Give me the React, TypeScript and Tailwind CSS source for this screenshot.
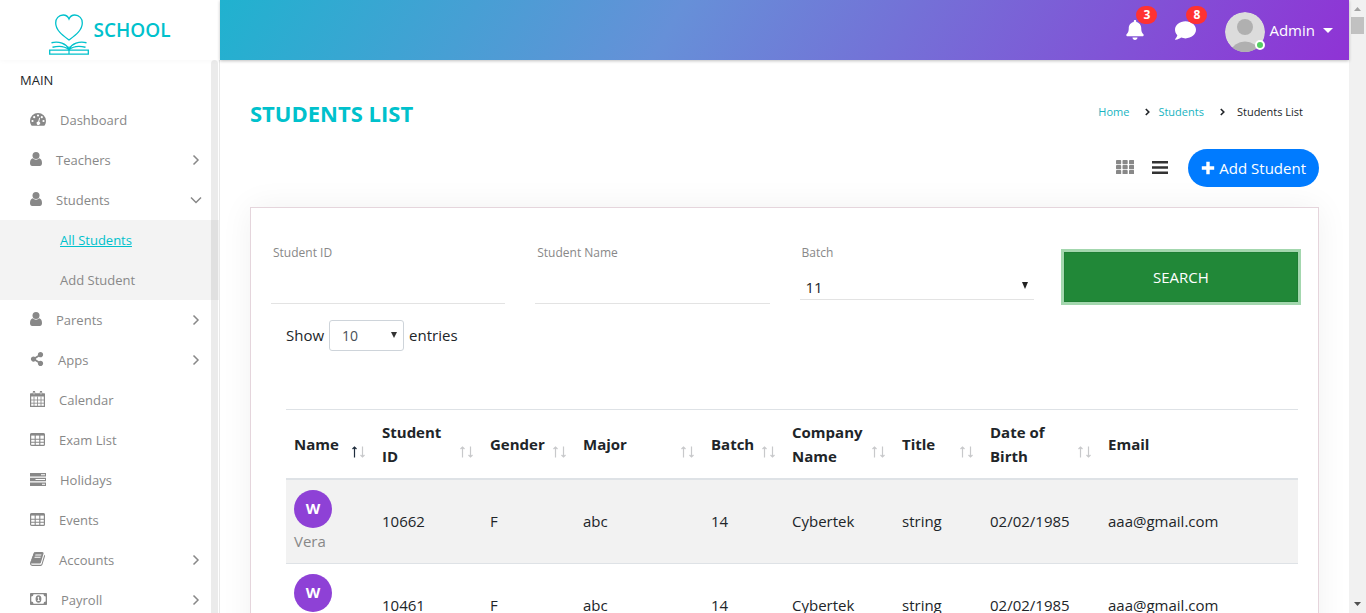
import React from "react";
import { FaBell, FaComment, FaShareAlt } from "react-icons/fa";

type IconProps = { className?: string };

const UserIcon = ({ className }: IconProps) => (
  <svg viewBox="0 0 12 14" className={className} fill="currentColor" aria-hidden="true">
    <circle cx="6" cy="3.6" r="3.5" />
    <path d="M2.7 6.2C.7 6.6 0 8.900 0 11.300 0 12.800.9 14 2.200 14h7.600c1.300 0 2.200-1.200 2.200-2.700 0-2.400-.7-4.700-2.700-5.100A4.600 4.600 0 0 1 6 7.700a4.600 4.600 0 0 1-3.300-1.500z" />
  </svg>
);

const GaugeIcon = ({ className }: IconProps) => (
  <svg viewBox="0 0 16 13" className={className} aria-hidden="true">
    <path d="M0 8a8 8 0 0 1 16 0c0 1.500-.4 3-1.200 4.300-.2.300-.4.400-.7.400H1.900c-.3 0-.5-.1-.7-.4A8 8 0 0 1 0 8z" fill="currentColor" />
    <g fill="#fff">
      <circle cx="2.500" cy="8" r="1.100" />
      <circle cx="4.200" cy="4.200" r="1.100" />
      <circle cx="8" cy="2.500" r="1.100" />
      <circle cx="11.800" cy="4.200" r="1.100" />
      <circle cx="13.500" cy="8" r="1.100" />
      <path d="M9.200 4.800l.9.200-.9 3.700a1.700 1.700 0 1 1-1-.2z" />
    </g>
  </svg>
);

const CalendarIcon = ({ className }: IconProps) => (
  <svg viewBox="0 0 15 16" className={className} fill="none" stroke="currentColor" aria-hidden="true">
    <path d="M.6 3h13.800v12.400H.6z" strokeWidth="1.200" />
    <path d="M.5 2.500h14v3H.5z" fill="currentColor" stroke="none" />
    <path d="M4 5.500v10M7.500 5.500v10M11 5.500v10M.5 9h14M.5 12.200h14" strokeWidth=".8" />
    <path d="M4 1v2.600M11 1v2.600" strokeWidth="2.400" strokeLinecap="round" />
    <path d="M4 1.200v2.200M11 1.200v2.200" stroke="#fff" strokeWidth=".8" />
  </svg>
);

const TableIcon = ({ className }: IconProps) => (
  <svg viewBox="0 0 15 13" className={className} fill="none" stroke="currentColor" aria-hidden="true">
    <rect x=".6" y=".6" width="13.800" height="11.800" rx="1" strokeWidth="1.200" />
    <path d="M.6 1.600h13.800" strokeWidth="2" />
    <path d="M5.200 1v11.500M9.800 1v11.500M.5 6.200h14M.5 9.300h14" strokeWidth="1.100" />
  </svg>
);

const TasksIcon = ({ className }: IconProps) => (
  <svg viewBox="0 0 16 13" className={className} aria-hidden="true">
    <path d="M0 0h16v3.600H0zM0 4.700h16v3.600H0zM0 9.400h16V13H0z" fill="currentColor" />
    <path d="M11 1.300h4v1h-4zM5.500 6H15v1H5.500zM12 10.700h3v1h-3z" fill="#fff" />
  </svg>
);

const BookIcon = ({ className }: IconProps) => (
  <svg viewBox="60 128 1670 1540" className={className} fill="currentColor" aria-hidden="true">
    <path d="M1703 478q40 57 18 129l-275 906q-19 64-76.500 107.500t-122.500 43.500h-923q-77 0-148.500-53.500t-99.500-131.500q-24-67-2-127 0-4 3-27t4-37q1-8-3-21.500t-3-19.500q2-11 8-21t16.500-23.500 16.500-23.500q23-38 45-91.500t30-91.500q3-10 .5-30t-.5-28q3-11 17-28t17-23q21-36 42-92t25-90q1-9-2.500-32t.5-28q4-13 22-30.500t22-22.500q19-26 42.500-84.500t27.500-96.500q1-8-3-25.500t-2-26.500q2-8 9-18t18-23 17-21q8-12 16.500-30.500t15-35 16-36 19.500-32 26.500-23.500 36-11.500 47.500 5.500l-1 3q38-9 51-9h761q74 0 114 56t18 130l-274 906q-36 119-71.500 153.500t-128.500 34.500h-869q-27 0-38 15-11 16-1 43 24 70 144 70h923q29 0 56-15.500t35-41.500l300-987q7-22 5-57 38 15 59 43zm-1064 2q-4 13 2 22.500t20 9.500h608q13 0 25.500-9.500t16.500-22.500l21-64q4-13-2-22.500t-20-9.500h-608q-13 0-25.500 9.500t-16.500 22.500zm-83 256q-4 13 2 22.500t20 9.500h608q13 0 25.500-9.500t16.500-22.500l21-64q4-13-2-22.500t-20-9.500h-608q-13 0-25.500 9.500t-16.500 22.500z" />
  </svg>
);

const MoneyIcon = ({ className }: IconProps) => (
  <svg viewBox="0 0 17 12" className={className} aria-hidden="true">
    <rect width="17" height="12" rx=".8" fill="currentColor" />
    <path d="M3.500 1.300h10a2.200 2.200 0 0 0 2.200 2.200v5a2.200 2.200 0 0 0-2.200 2.200h-10a2.200 2.200 0 0 0-2.200-2.200v-5a2.200 2.200 0 0 0 2.200-2.200z" fill="#fff" />
    <ellipse cx="8.500" cy="6" rx="2.900" ry="3.700" fill="currentColor" />
    <path d="M7.400 4.700l1-.9h.7v3.500h.8v.8H7.300v-.8h.8V5.100l-.4.300z" fill="#fff" />
  </svg>
);

const Chevron = ({ open }: { open?: boolean }) => (
  <svg viewBox="0 0 12 12" className="ml-auto h-3 w-3" fill="none" stroke="currentColor" strokeWidth="1.500" aria-hidden="true">
    {open ? <path d="M1 3.500l5 5 5-5" /> : <path d="M3.500 1.500L8 6l-4.500 4.500" />}
  </svg>
);

const Logo = () => (
  <svg viewBox="0 0 40 42" className="h-[42px] w-10" fill="none" stroke="#00c1cc" aria-hidden="true">
    <path d="M20 27C14 22.500 6.700 17.500 6.700 10A7.500 7.500 0 0 1 14.200 2C17 2 19 3.500 20 6c1-2.500 3-4 5.800-4a7.500 7.500 0 0 1 7.500 8c0 7.500-7.300 12.500-13.300 17z" strokeWidth="1.300" />
    <path d="M.7 37.200h38.600v3.900H.7z" strokeWidth="1.300" />
    <path d="M20 33.500v7.500" strokeWidth="1.200" />
    <path d="M2.500 29.700c7.500-1.700 14.500.8 17.500 6.300 3-5.500 10-8 17.500-6.300M3.500 34.300c6-1.500 12.500-1 16.500 2.500 4-3.500 10.500-4 16.500-2.500" strokeWidth="1.400" />
  </svg>
);

type NavItem = {
  label: string;
  icon: React.ReactNode;
  expandable?: boolean;
  children?: { label: string; active?: boolean }[];
};

const navItems: NavItem[] = [
  { label: "Dashboard", icon: <GaugeIcon className="h-[13px] w-4" /> },
  { label: "Teachers", icon: <UserIcon className="h-3.5 w-3" />, expandable: true },
  {
    label: "Students",
    icon: <UserIcon className="h-3.5 w-3" />,
    expandable: true,
    children: [{ label: "All Students", active: true }, { label: "Add Student" }],
  },
  { label: "Parents", icon: <UserIcon className="h-3.5 w-3" />, expandable: true },
  { label: "Apps", icon: <FaShareAlt className="h-3.5 w-3.5" />, expandable: true },
  { label: "Calendar", icon: <CalendarIcon className="h-4 w-[15px]" /> },
  { label: "Exam List", icon: <TableIcon className="h-[13px] w-[15px]" /> },
  { label: "Holidays", icon: <TasksIcon className="h-[13px] w-4" /> },
  { label: "Events", icon: <TableIcon className="h-[13px] w-[15px]" /> },
  { label: "Accounts", icon: <BookIcon className="h-3.5 w-[15px]" />, expandable: true },
  { label: "Payroll", icon: <MoneyIcon className="h-3 w-[17px]" />, expandable: true },
];

const columns = [
  { label: "Name", width: "w-[88px]", sorted: true },
  { label: "Student ID", width: "w-[108px]" },
  { label: "Gender", width: "w-[93px]" },
  { label: "Major", width: "w-[128px]" },
  { label: "Batch", width: "w-[81px]" },
  { label: "Company Name", width: "w-[110px]" },
  { label: "Title", width: "w-[88px]" },
  { label: "Date of Birth", width: "w-[118px]" },
  { label: "Email", width: "w-[198px]", unsortable: true },
];

const students = [
  { name: "Vera", id: "10662" },
  { name: "Vera", id: "10461" },
];

const SortArrows = ({ active }: { active?: boolean }) => (
  <svg viewBox="0 0 14 12" className="absolute right-2 bottom-5 h-3 w-3.5" fill="none" strokeWidth="1.200" aria-hidden="true">
    <path d="M2.500 11.500V1M.5 3L2.500 1l2 2" stroke={active ? "#1f2d3d" : "#c8c9cb"} />
    <path d="M10.500 .5V11M8.500 9l2 2 2-2" stroke="#c8c9cb" />
  </svg>
);

const Header = () => (
  <header className="z-10 flex h-[60px] shrink-0">
    <a href="#home" className="flex w-[220px] shrink-0 items-center justify-center gap-1 bg-white pt-[7px] shadow-[0_0_6px_rgba(0,0,0,0.04)]">
      <Logo />
      <span className="pb-1.5 text-[19px] font-semibold text-[#00c1cc]">SCHOOL</span>
    </a>
    <div className="flex grow items-center justify-end bg-[linear-gradient(120deg,#20b2cf_0%,#6690d8_40%,#8f33d5_100%)] pr-4 text-white shadow-[0_1px_3px_rgba(0,0,0,0.25)]">
      <button type="button" aria-label="Notifications" className="relative mr-[30px]">
        <FaBell className="h-5 w-5" />
        <span className="absolute -top-[14px] left-[11px] flex h-[18px] w-[21px] items-center justify-center rounded-full bg-[#ff3232] text-xs font-bold">3</span>
      </button>
      <button type="button" aria-label="Messages" className="relative mr-[29px]">
        <FaComment className="h-[21px] w-[21px]" />
        <span className="absolute -top-[14px] left-[11px] flex h-[18px] w-[21px] items-center justify-center rounded-full bg-[#ff3232] text-xs font-bold">8</span>
      </button>
      <button type="button" className="flex items-center gap-1 text-[15px]">
        <span className="relative mt-1 block">
          <svg viewBox="0 0 40 40" className="h-10 w-10 rounded-full" aria-hidden="true">
            <circle cx="20" cy="20" r="20" fill="#dcdcdc" />
            <circle cx="20" cy="15" r="8" fill="#b0b0b0" />
            <path d="M5 40a15.500 14 0 0 1 30 0z" fill="#b0b0b0" />
          </svg>
          <span className="absolute right-0 bottom-[2px] h-2.5 w-2.5 rounded-full border-2 border-white bg-[#55ce63]" />
        </span>
        Admin
        <svg viewBox="0 0 10 5" className="ml-1 h-[5px] w-2.5" fill="currentColor" aria-hidden="true">
          <path d="M0 0h10L5 5z" />
        </svg>
      </button>
    </div>
  </header>
);

const Sidebar = () => (
  <aside className="flex w-[220px] shrink-0 overflow-hidden border-r border-[#e8e8e8] bg-white text-[#888]">
    <nav className="relative grow text-[13px]">
      <div className="flex h-10 items-center px-5 pt-0.5 text-[#212529]">MAIN</div>
      <ul>
        {navItems.map((item) => (
          <li key={item.label}>
            <a href="#nav" className="flex h-10 items-center gap-3.5 pr-[17px] pl-[30px]">
              <span className="pb-0.5">{item.icon}</span>
              <span className="pt-0.5">{item.label}</span>
              {item.expandable && <Chevron open={!!item.children} />}
            </a>
            {item.children && (
              <ul className="bg-[#f3f3f3]">
                {item.children.map((child) => (
                  <li key={child.label}>
                    <a
                      href="#nav"
                      className={`flex h-10 items-center pt-0.5 pl-[60px] ${child.active ? "text-[#00c1cc] underline" : ""}`}
                    >
                      {child.label}
                    </a>
                  </li>
                ))}
              </ul>
            )}
          </li>
        ))}
      </ul>
      <div className="absolute top-0 right-px h-full w-[7px] rounded-t bg-black/8" />
    </nav>
  </aside>
);

const TextField = ({ id, label }: { id: string; label: string }) => (
  <div className="flex flex-col border-b border-[#e3e3e3]">
    <label htmlFor={id} className="pl-0.5 text-xs leading-5 text-[#888]">
      {label}
    </label>
    <input id={id} type="text" className="h-10 w-full px-1 text-[15px] outline-none" />
  </div>
);

const SearchForm = () => (
  <form className="grid grid-cols-4 items-start gap-[30px]" onSubmit={(e) => e.preventDefault()}>
    <TextField id="student-id" label="Student ID" />
    <TextField id="student-name" label="Student Name" />
    <div className="flex flex-col border-b border-[#e3e3e3]">
      <label htmlFor="batch" className="pl-0.5 text-xs leading-5 text-[#888]">
        Batch
      </label>
      <div className="relative pt-3">
        <select id="batch" className="block h-6 w-full appearance-none pl-1.5 text-[15px] outline-none">
          <option>11</option>
        </select>
        <svg viewBox="0 0 6 7" className="pointer-events-none absolute right-1.5 bottom-2.5 h-[7px] w-1.5" fill="#222" aria-hidden="true">
          <path d="M0 0h6L3 7z" />
        </svg>
      </div>
    </div>
    <button
      type="submit"
      className="mt-[9px] h-[50px] border border-[#1e7e34] bg-[#218838] text-[15px] text-white shadow-[0_0_0_3px_#a3d7ae]"
    >
      SEARCH
    </button>
  </form>
);

const StudentsTable = () => (
  <table className="w-full table-fixed border-collapse text-left text-[15px]">
    <thead>
      <tr className="border-t border-b-2 border-[#dee2e6]">
        {columns.map((c) => (
          <th key={c.label} className={`relative h-[69px] leading-6 font-bold ${c.width} ${c.unsortable ? "px-2" : "pr-7 pl-2"}`}>
            {c.label}
            {!c.unsortable && <SortArrows active={c.sorted} />}
          </th>
        ))}
      </tr>
    </thead>
    <tbody>
      {students.map((s) => (
        <tr key={s.id} className="h-[84px] border-b border-[#dee2e6] odd:bg-[#f2f2f2]">
          <td className="px-2 pt-2.5 pb-2">
            <a href="#profile" className="flex h-[38px] w-[38px] items-center justify-center rounded-full bg-[#8e41d6] font-bold text-white">
              W
            </a>
            <a href="#profile" className="block leading-[27px] text-[#888]">
              {s.name}
            </a>
          </td>
          <td className="px-2">{s.id}</td>
          <td className="px-2">F</td>
          <td className="px-2">abc</td>
          <td className="px-2">14</td>
          <td className="px-2">Cybertek</td>
          <td className="px-2">string</td>
          <td className="px-2">02/02/1985</td>
          <td className="px-2">aaa@gmail.com</td>
        </tr>
      ))}
    </tbody>
  </table>
);

const Crumb = () => (
  <svg viewBox="0 0 5 8" className="h-2 w-[5px]" fill="none" stroke="#212529" strokeWidth="1.600" aria-hidden="true">
    <path d="M.8 1l3 3-3 3" />
  </svg>
);

const Main = () => (
  <main className="grow overflow-hidden bg-white px-[30px]">
    <div className="flex items-center justify-between pt-[37px]">
      <h1 className="text-[22px] leading-8 font-bold text-[#00c1cc]">STUDENTS LIST</h1>
      <nav aria-label="Breadcrumb" className="flex items-center pr-4 pb-0.5 text-[11px]">
        <a href="#home" className="mr-4 text-[#17b3c1]">Home</a>
        <Crumb />
        <a href="#students" className="mr-4 ml-2 text-[#17b3c1]">Students</a>
        <Crumb />
        <span className="ml-3">Students List</span>
      </nav>
    </div>
    <div className="mt-5 flex items-center justify-end">
      <button type="button" aria-label="Grid view" className="mr-[18px] pb-0.5">
        <svg viewBox="0 0 18 14" className="h-3.5 w-[18px]" fill="#888" aria-hidden="true">
          {[0, 5, 10].map((y) =>
            [0, 6.500, 13].map((x) => <rect key={`${x}-${y}`} x={x} y={y} width="5.200" height="4.200" rx=".8" />)
          )}
        </svg>
      </button>
      <button type="button" aria-label="List view" className="mr-5 pb-0.5">
        <svg viewBox="0 0 16 13" className="h-[13px] w-4" fill="#333" aria-hidden="true">
          <path d="M0 0h16v2.600H0zM0 5.200h16v2.600H0zM0 10.400h16V13H0z" />
        </svg>
      </button>
      <a href="#add" className="flex h-[38px] items-center gap-1 rounded-full bg-[#007bff] px-[13px] text-[15px] text-white">
        <svg viewBox="0 0 14 14" className="h-3.5 w-3.5" stroke="currentColor" strokeWidth="3.400" aria-hidden="true">
          <path d="M7 .8v12.400M.8 7h12.400" />
        </svg>
        Add Student
      </a>
    </div>
    <section className="mt-5 border border-[#e5d5dc] bg-white px-5 pt-[35px] shadow-[0_0_31px_rgba(0,0,0,0.06)]">
      <SearchForm />
      <div className="px-[15px] pt-4">
        <div className="flex items-center gap-[5px] text-[15px]">
          <label htmlFor="length">Show</label>
          <div className="relative">
            <select id="length" className="block h-[31px] w-[75px] appearance-none rounded-[3px] border border-[#ced4da] pl-3 text-sm text-[#495057] outline-none">
              <option>10</option>
            </select>
            <svg viewBox="0 0 6 6" className="pointer-events-none absolute top-3 right-[7px] h-1.5 w-1.5" fill="#333" aria-hidden="true">
              <path d="M0 0h6L3 6z" />
            </svg>
          </div>
          <span>entries</span>
        </div>
        <div className="mt-[58px]">
          <StudentsTable />
        </div>
      </div>
    </section>
  </main>
);

const PageScrollbar = () => (
  <div aria-hidden="true" className="flex w-[17px] shrink-0 flex-col items-center bg-[#f1f1f1]">
    <svg viewBox="0 0 17 17" className="h-[17px] w-[17px]">
      <path d="M5 11h7L8.500 7z" fill="#a3a3a3" />
    </svg>
    <div className="h-[17px] w-[13px] bg-[#c1c1c1]" />
    <svg viewBox="0 0 17 17" className="mt-auto h-[17px] w-[17px]">
      <path d="M5 6h7l-3.500 4z" fill="#505050" />
    </svg>
  </div>
);

export default function App() {
  return (
    <div className="flex h-screen overflow-hidden bg-white font-['Open_Sans','Noto_Sans',sans-serif] text-[#212529]">
      <div className="flex min-w-0 grow flex-col">
        <Header />
        <div className="flex min-h-0 grow">
          <Sidebar />
          <Main />
        </div>
      </div>
      <PageScrollbar />
    </div>
  );
}
